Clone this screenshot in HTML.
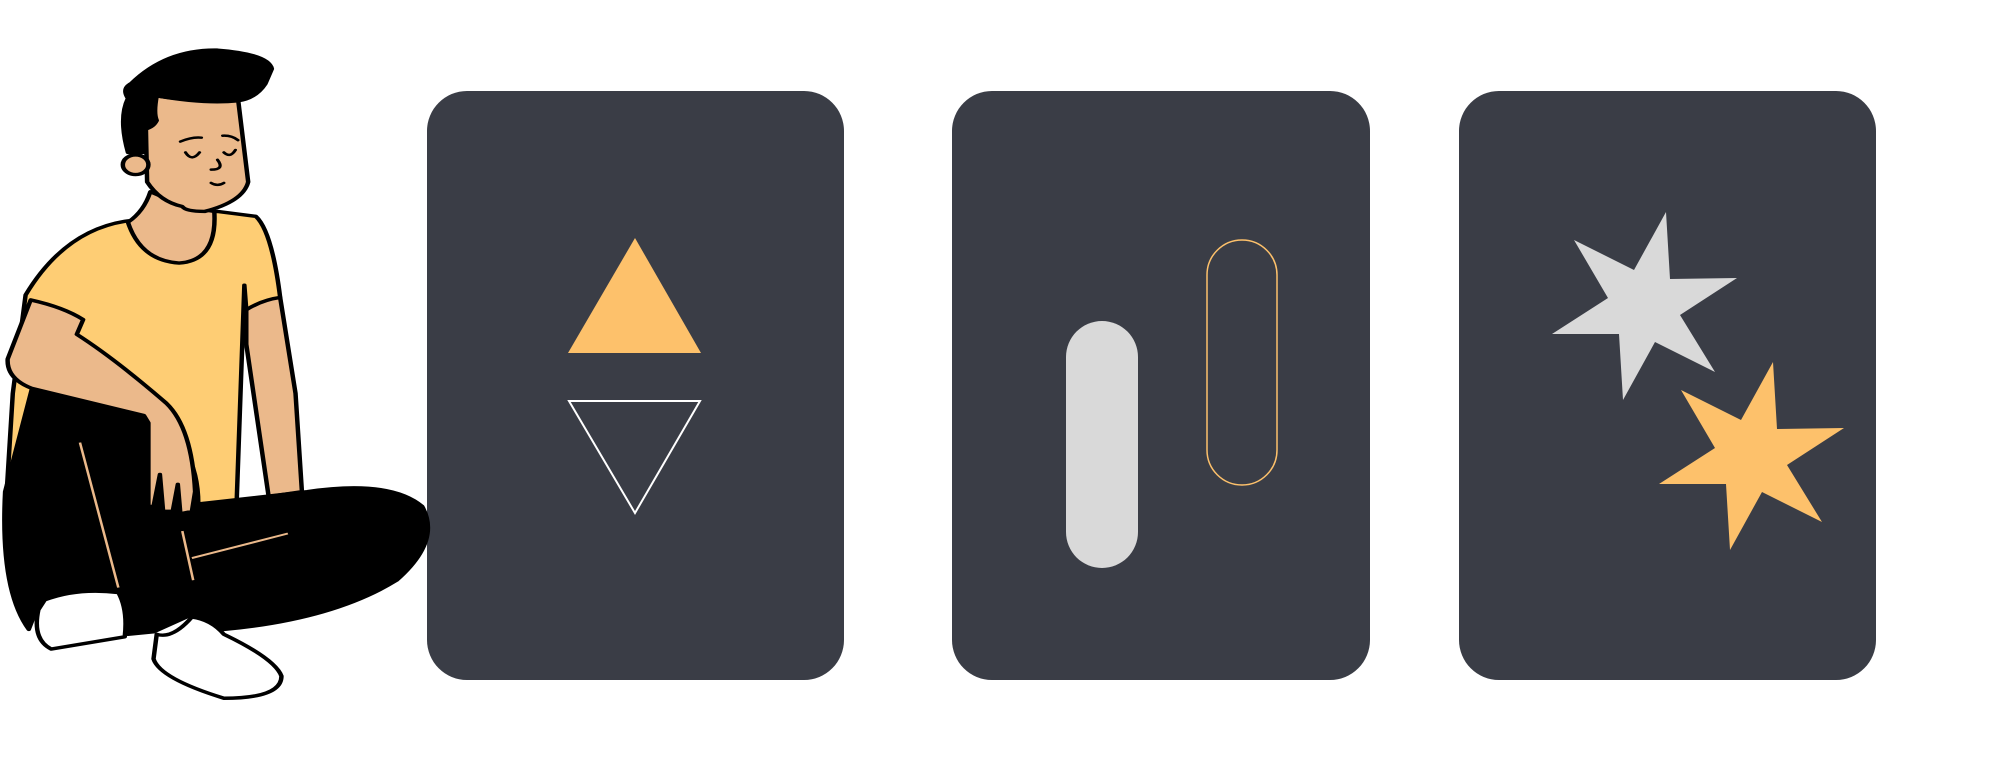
<!DOCTYPE html>
<html><head><meta charset="utf-8"><style>
html,body{margin:0;padding:0;background:#fff;width:2006px;height:771px;overflow:hidden}
.card{position:absolute;top:91px;height:589px;background:#3a3d46;border-radius:40px}
svg{position:absolute;left:0;top:0}
</style></head><body>
<div class="card" style="left:427px;width:417px"></div>
<div class="card" style="left:952px;width:418px"></div>
<div class="card" style="left:1459px;width:417px"></div>
<svg width="2006" height="771" viewBox="0 0 2006 771">
<polygon points="635,238 701,353 568,353" fill="#fdc16b"/>
<polygon points="569,401 700,401 635,513" fill="none" stroke="#fff" stroke-width="2"/>
<rect x="1066" y="321" width="72" height="247" rx="36" fill="#d9d9d9"/>
<rect x="1207" y="240" width="70" height="245" rx="35" fill="none" stroke="#fdc16b" stroke-width="1.5"/>
<g id="st"><polygon fill="#d9d9d9" points="1666,212 1670,279 1737,278 1680,315 1715,372 1655,342 1623,400 1619,334 1552,334 1608,298 1574,240 1634,270"/></g>
<polygon transform="translate(107,150)" fill="#fdc16b" points="1666,212 1670,279 1737,278 1680,315 1715,372 1655,342 1623,400 1619,334 1552,334 1608,298 1574,240 1634,270"/>
</svg>
<svg width="1003" height="771" viewBox="0 0 1568 1568" preserveAspectRatio="none">
<g stroke="#000" stroke-width="7" stroke-linejoin="round">
<!-- shirt -->
<path d="M195,450 Q100,470 40,600 L20,800 L10,1010 L230,840 Q310,900 310,1025 L370,1020 L382,580 L385,630 L438,605 Q425,470 400,440 L340,430 Z" fill="#fecd74"/>
<!-- right arm -->
<path d="M385,630 Q410,610 438,605 L462,800 L472,1000 L420,1010 L385,700 Z" fill="#ebb98b"/>
<!-- pants -->
<path d="M50,790 L230,840 Q300,900 310,1025 L480,1000 Q610,975 660,1030 Q690,1100 620,1180 Q520,1260 350,1280 L300,1250 L240,1285 L200,1290 L190,1200 Q100,1200 60,1230 L45,1280 Q0,1200 8,1000 Z" fill="#000"/>
<!-- left arm -->
<path d="M48,610 Q100,625 130,650 L120,680 Q180,730 260,820 Q300,870 305,1000 L300,1040 L282,1045 L278,985 L270,1040 L255,1040 L250,965 L240,1030 L232,1030 L232,860 L225,845 L50,790 Q10,770 12,730 Z" fill="#ebb98b"/>
<!-- neck -->
<path d="M235,390 Q225,430 200,452 Q220,530 280,535 Q340,530 335,430 L290,420 Z" fill="#ebb98b"/>
<!-- face -->
<path d="M245,195 Q320,210 372,200 L388,370 Q380,410 320,430 Q290,430 285,420 Q250,410 230,370 L228,260 Z" fill="#ebb98b"/>
<circle cx="212" cy="335" r="20" fill="#ebb98b"/>
<!-- hair -->
<path d="M205,170 Q260,100 340,102 Q420,110 425,140 L415,170 Q400,200 372,205 Q320,212 245,195 Q240,230 245,245 Q240,258 228,262 L228,310 L200,310 Q185,240 200,200 Q190,180 205,170 Z" fill="#000"/>
<!-- shoes -->
<path d="M70,1220 Q120,1195 185,1205 Q200,1240 195,1295 L80,1320 Q50,1300 60,1240 Z" fill="#fff"/>
<path d="M245,1290 Q270,1300 300,1255 Q330,1260 350,1290 Q430,1340 440,1375 Q440,1420 350,1420 Q250,1380 240,1340 Z" fill="#fff"/>
</g>
<g stroke="#000" stroke-width="5" fill="none" stroke-linecap="round">
<path d="M290,310 Q300,330 312,310"/><path d="M350,310 Q360,322 368,305"/>
<path d="M282,288 Q300,278 315,280"/><path d="M348,276 Q362,275 372,285"/>
<path d="M340,325 Q352,345 330,345"/><path d="M330,372 Q340,380 350,372"/>
</g>
<g stroke="#ebb98b" stroke-width="4" fill="none">
<path d="M125,900 L185,1195"/><path d="M300,1135 L450,1085"/><path d="M285,1080 L302,1180"/>
</g>
</svg>
</body></html>
